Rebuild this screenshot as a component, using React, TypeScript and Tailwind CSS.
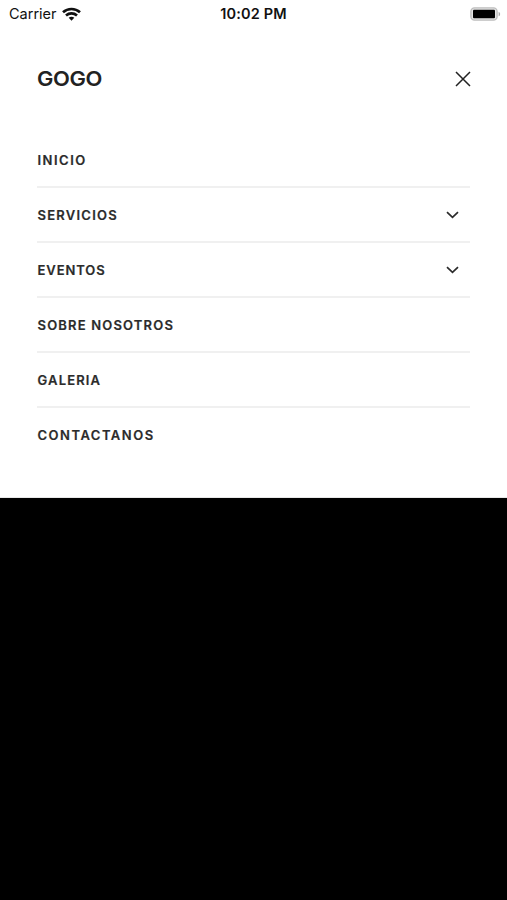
type MenuItem = { label: string; expandable?: boolean; tracking: string };

const items: MenuItem[] = [
  { label: 'INICIO', tracking: 'tracking-[1.5px]' },
  { label: 'SERVICIOS', expandable: true, tracking: 'tracking-[1.25px]' },
  { label: 'EVENTOS', expandable: true, tracking: 'tracking-[0.9px]' },
  { label: 'SOBRE NOSOTROS', tracking: 'tracking-[1.18px]' },
  { label: 'GALERIA', tracking: 'tracking-[1.15px]' },
  { label: 'CONTACTANOS', tracking: 'tracking-[1.5px]' },
];

function WifiIcon() {
  return (
    <svg width="19" height="14" viewBox="0 0 19 14" fill="none" stroke="#111" strokeWidth="2.7">
      <path d="M1 5.2C5.8.9 13.2.9 18 5.2" />
      <path d="M4 8.5c3.2-2.8 7.8-2.8 11 0" />
      <path d="M6.7 10.8c1.6-1.4 4-1.4 5.6 0L9.5 13.7z" fill="#111" stroke="none" />
    </svg>
  );
}

function BatteryIcon() {
  return (
    <svg width="31" height="14" viewBox="0 0 31 14">
      <rect x="0.9" y="0.9" width="26.2" height="12.2" rx="3.6" fill="#e4e4e4" stroke="#bdbdbd" strokeWidth="1.4" />
      <rect x="3" y="2.7" width="22" height="8.6" rx="1" fill="#000" />
      <path d="M28.6 4.7c2 .8 2 3.8 0 4.6z" fill="#aaa" />
    </svg>
  );
}

function StatusBar() {
  return (
    <header className="grid h-[27px] grid-cols-3 items-center text-[14.5px] text-[#111]">
      <div className="flex items-center gap-[5px] pl-[9px]">
        <span>Carrier</span>
        <WifiIcon />
      </div>
      <span className="text-center font-semibold tracking-[0.15px] whitespace-nowrap">10:02 PM</span>
      <div className="flex justify-end pr-[6px]">
        <BatteryIcon />
      </div>
    </header>
  );
}

export default function App() {
  return (
    <div className="h-[900px] w-[507px] overflow-hidden bg-black font-['Inter',sans-serif]">
      <div className="h-[498px] border-b border-[#e8e8e8] bg-white">
        <StatusBar />
        <div className="flex h-[104px] items-center justify-between pr-[36px] pl-[37px]">
          <span className="origin-left scale-x-[1.07] pt-px text-[20.5px] font-semibold tracking-[-0.4px] text-[#222]">
            GOGO
          </span>
          <button aria-label="Cerrar">
            <svg width="16" height="16" viewBox="0 0 16 16" fill="none" stroke="#222" strokeWidth="1.5">
              <path d="M1 1l14 14M15 1L1 15" />
            </svg>
          </button>
        </div>
        <nav className="mr-[37px] ml-[37px] flex flex-col pt-[2px]">
          {items.map((item) => (
            <a
              key={item.label}
              className="flex h-[55px] items-center justify-between border-b-2 border-[#f0f0f0] pt-px pr-[11.5px] text-[13px] font-semibold text-[#2b2b2b] last:border-transparent"
            >
              <span className={`pt-[2px] pl-[0.5px] [-webkit-text-stroke:0.2px_#2b2b2b] ${item.tracking}`}>
                {item.label}
              </span>
              {item.expandable && (
                <svg width="13" height="8" viewBox="0 0 13 8" fill="none" stroke="#2b2b2b" strokeWidth="1.7">
                  <path d="M1 1.2l5.5 5.2L12 1.2" />
                </svg>
              )}
            </a>
          ))}
        </nav>
      </div>
    </div>
  );
}
